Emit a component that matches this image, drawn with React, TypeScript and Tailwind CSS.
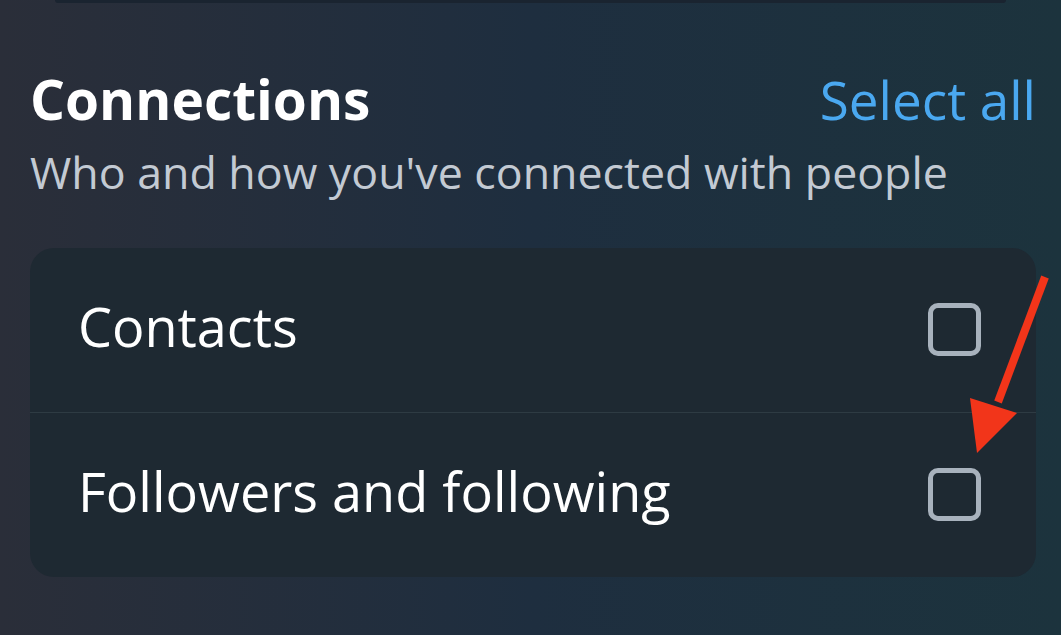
import { Fragment } from 'react';

const ROWS = ['Contacts', 'Followers and following'];

function Checkbox() {
  return <span className="block h-[53px] w-[53px] rounded-[10px] border-[5px] border-[#a8b2bd]" />;
}

export default function App() {
  return (
    <div
      className="relative h-[635px] w-[1061px] overflow-hidden bg-gradient-to-r from-[#2a2e39] via-[#1e2e3f] to-[#1c333d] text-white"
      style={{ fontFamily: '"Open Sans", "Noto Sans", sans-serif' }}
    >
      {/* end of the previous card */}
      <div className="mx-[55px] h-[3px] rounded-b-md bg-[#1a2430]" />

      <div className="pl-[30px] pr-[25px] pt-[68px]">
        <div className="flex items-baseline justify-between">
          <h2 className="text-[55px] font-bold leading-none">Connections</h2>
          <button className="text-[53px] leading-none text-[#4aa8f0]">Select all</button>
        </div>
        <p className="mt-[24px] text-[44.7px] leading-none text-[#c3cad3]">Who and how you've connected with people</p>

        <div className="mt-[53px] overflow-hidden rounded-[24px] bg-[#1e2932]">
          {ROWS.map((label, i) => (
            <Fragment key={label}>
              {i > 0 && <div className="h-px bg-[#2e3b43]" />}
              <div className="flex h-[164px] items-center justify-between pl-[48px] pr-[55px]">
                <span className="mb-[8px] text-[54px] leading-none">{label}</span>
                <Checkbox />
              </div>
            </Fragment>
          ))}
        </div>
      </div>

      {/* annotation arrow */}
      <svg className="absolute left-0 top-0" width="1061" height="635" viewBox="0 0 1061 635">
        <line x1="1045" y1="277" x2="998" y2="402" stroke="#f2351a" strokeWidth="8" />
        <polygon points="970,398 1017,413 977,453" fill="#f2351a" />
      </svg>
    </div>
  );
}
